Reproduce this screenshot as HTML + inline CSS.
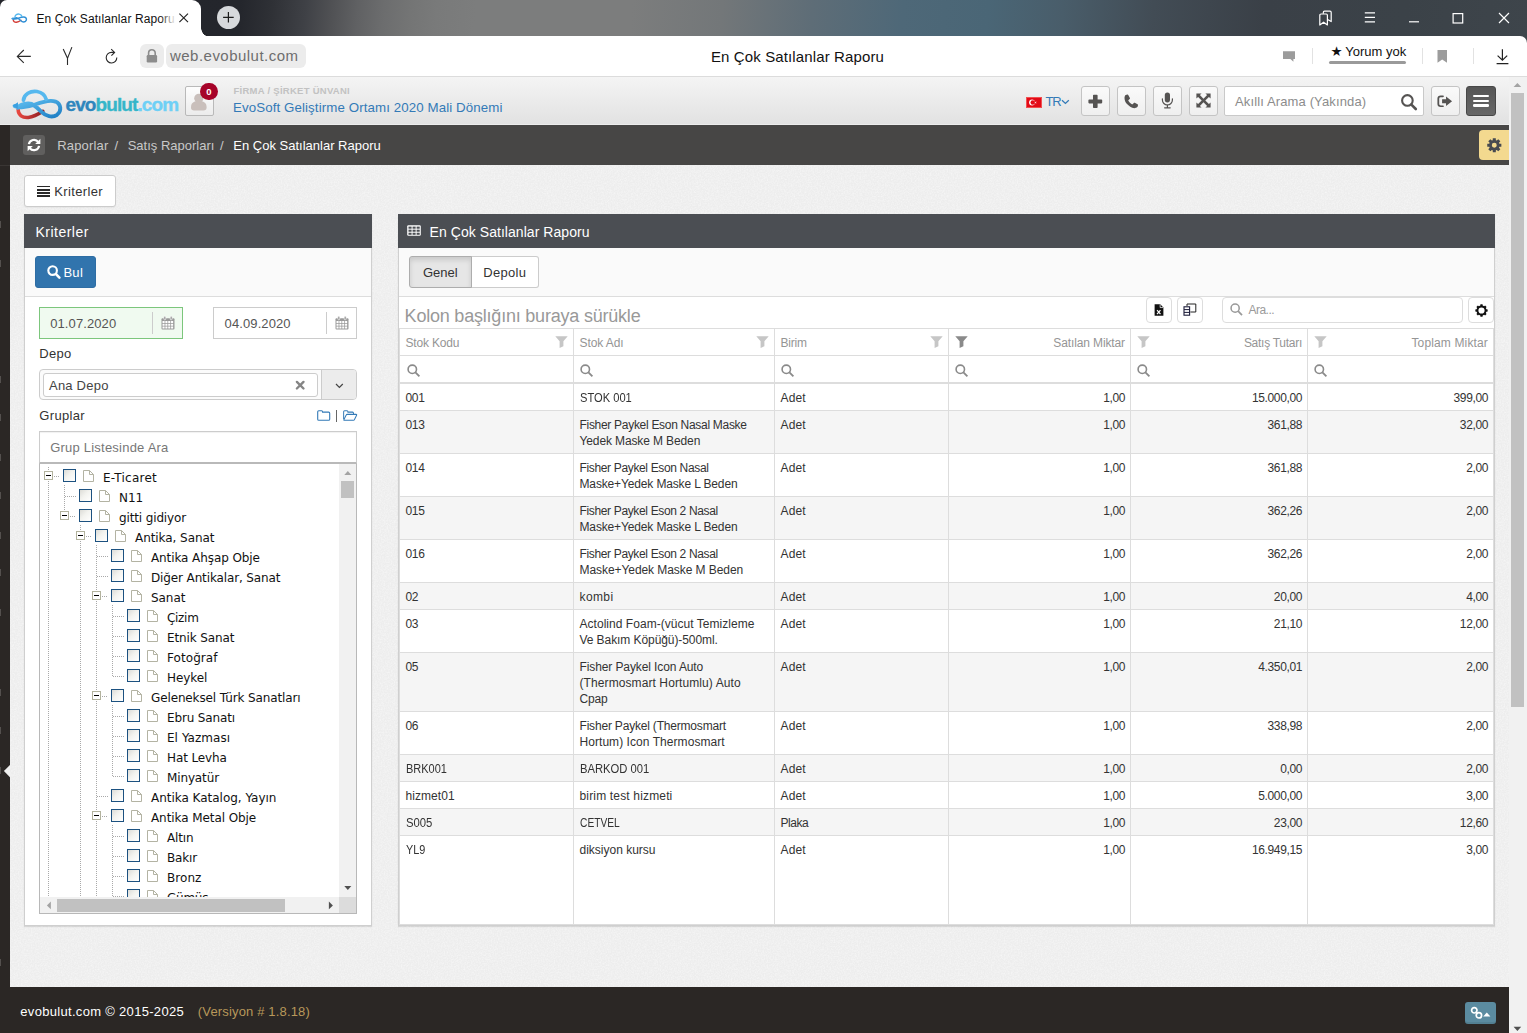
<!DOCTYPE html><html lang="tr"><head><meta charset="utf-8"><title>En Çok Satılanlar Raporu</title><style>
*{box-sizing:border-box;margin:0;padding:0}
html,body{width:1527px;height:1033px;overflow:hidden;background:#fff}
body{font-family:"Liberation Sans",sans-serif;font-size:13px;color:#333;position:relative}
.a{position:absolute}
.t{position:absolute;white-space:nowrap;line-height:1}
svg{position:absolute;display:block;overflow:visible}
/* browser chrome */
#titlebar{left:0;top:0;width:1527px;height:44px;background:linear-gradient(95deg,#23252b 0px,#24262c 240px,#2f3136 272px,#3f4146 305px,#505154 331px,#606163 357px,#6c6d6e 383px,#747575 410px,#797a7a 436px,#7c7d7d 475px,#7c7d7d 630px,#737779 720px,#5e6d77 810px,#4e6878 900px,#4a6676 985px,#495d6a 1060px,#424c55 1150px,#3a4047 1260px,#3b4248 1400px,#3e454b 1527px)}
#tab{left:0;top:0;width:201px;height:37px;background:#fff;border-radius:7px 9px 0 0}
#tabfoot{left:201px;top:28px;width:9px;height:9px;background:radial-gradient(circle at 100% 0,rgba(255,255,255,0) 8.5px,#fff 9px)}
#addr{left:0;top:36px;width:1527px;height:41px;background:#fff;border-bottom:1px solid #dcdcdc;border-radius:0 7px 0 0}
#newtab{left:217px;top:5.5px;width:23.4px;height:23.4px;border-radius:50%;background:#d7d9dc}
.pill{background:#ececec;border-radius:6px}
.vsep{width:1px;background:#e2e2e2}
/* app */
#apphead{left:0;top:77px;width:1509px;height:48px;background:linear-gradient(#f4f4f4,#e2e2e2 97%,#ededed 98%)}
#side{left:0;top:125px;width:10px;height:908px;background:#2b2725}
#crumb{left:10px;top:125px;width:1499px;height:40px;background:#474645}
#content{left:10px;top:165px;width:1499px;height:822px;background:#ededed}
#foot{left:0;top:987px;width:1509px;height:46px;background:#2b2725}
#vscroll{left:1509px;top:77px;width:18px;height:956px;background:#f1f1f1}
.hbtn{width:29.5px;height:29.5px;border:1px solid #c4c4c4;border-radius:3px;background:linear-gradient(#fafafa,#efefef)}
.os{letter-spacing:.2px}
</style></head><body>
<div class="a" id="titlebar"></div>
<div class="a" id="addr"></div>
<div class="a" id="tab"></div><div class="a" id="tabfoot"></div>
<div class="a" id="newtab"></div>
<svg style="left:10.6px;top:12.6px" width="17" height="10.3" viewBox="0 0 56 34"><path d="M7.5 22 C7.5 28 12 31 18 30.4 C24 29.6 29 26.6 33 24" fill="none" stroke="#d43c36" stroke-width="4.6" stroke-linecap="round"/><path d="M4 18.6 C10 20.8 18 19.6 25 17 C32 14.4 40 11.6 46 14 C52 16.6 52.6 24 47.6 27.6 C42.6 31 36 29 31.6 24.6 C27 20 23 15.6 17.6 16 C12 16.4 8.4 18.6 7 20.4" fill="none" stroke="#2f8fd6" stroke-width="4.8" stroke-linecap="round" stroke-linejoin="round"/><path d="M13 12.6 C13.6 6.6 20 2.6 27 3.6 C32.6 4.6 35.4 8 36.4 11.6" fill="none" stroke="#56b8ee" stroke-width="4.4" stroke-linecap="round"/><path d="M.6 18.4 L8 13.6 L7.8 22.4 Z" fill="#3a9fe0"/></svg>
<div class="a" style="left:36px;top:9px;width:140px;height:18px;overflow:hidden"><span class="t" style="left:0.4px;top:3.5px;font-size:12px;color:#111;letter-spacing:.1px">En Çok Satılanlar Raporu</span></div>
<div class="a" style="left:160px;top:8px;width:18px;height:20px;background:linear-gradient(90deg,rgba(255,255,255,0),#fff 90%)"></div>
<svg style="left:178px;top:12px" width="12" height="12" viewBox="0 0 12 12"><path d="M1.4 1.6 L10 10.2 M10 1.6 L1.4 10.2" stroke="#222" stroke-width="1.15" fill="none"/></svg>
<svg style="left:222px;top:11px" width="13" height="13" viewBox="0 0 13 13"><path d="M6.4 1 V11.6 M1.1 6.3 H11.7" stroke="#1c1c1c" stroke-width="1.2" fill="none"/></svg>
<svg style="left:1317px;top:9px" width="18" height="18" viewBox="0 0 18 18"><path d="M2.8 16 V6.2 Q2.8 5 4 5 H9.2 Q10.4 5 10.4 6.2 V16 L6.6 13.2 Z" fill="none" stroke="#fff" stroke-width="1.2" stroke-linejoin="round"/><path d="M6.3 4.8 V3.4 Q6.3 2.2 7.5 2.2 H13 Q14.2 2.2 14.2 3.4 V12.6 L10.6 10.4" fill="none" stroke="#fff" stroke-width="1.2" stroke-linejoin="round"/></svg>
<svg style="left:1364px;top:11px" width="12" height="12" viewBox="0 0 12 12"><path d="M.8 1.9 H11 M.8 6.4 H11 M.8 10.9 H11" stroke="#fff" stroke-width="1.1" fill="none"/></svg>
<svg style="left:1408px;top:18px" width="12" height="6" viewBox="0 0 12 6"><path d="M1 3.8 H11" stroke="#fff" stroke-width="1.2" fill="none"/></svg>
<svg style="left:1452px;top:12px" width="12" height="12" viewBox="0 0 12 12"><rect x="1.1" y="1.6" width="9.6" height="9.4" stroke="#fff" stroke-width="1.2" fill="none"/></svg>
<svg style="left:1498px;top:12px" width="12" height="12" viewBox="0 0 12 12"><path d="M1 1 L11 11 M11 1 L1 11" stroke="#fff" stroke-width="1.15" fill="none"/></svg>
<svg style="left:0;top:36px" width="130" height="42" viewBox="0 36 130 42"><g stroke="#2b2b2b" stroke-width="1.1" fill="none"><path d="M30.8 56.4 H17.3 M23.8 50 L17.3 56.4 L23.8 62.8"/><path d="M63.2 48.9 L67.5 58.2 M71.9 47.1 L67.5 58.4 V64.9"/><path d="M116.8 57.5 A5.3 5.3 0 1 1 111.5 52.4 H114.4 M111.2 49.2 L114.6 52.4 L111.4 55.7"/></g></svg>
<div class="a pill" style="left:140px;top:44px;width:24px;height:24px"></div>
<svg style="left:145px;top:48px" width="14" height="16" viewBox="0 0 14 16"><path d="M3.6 7.4 V5 A3.3 3.3 0 0 1 10.2 5 V7.4" stroke="#8c8c8c" stroke-width="1.6" fill="none"/><rect x="1.7" y="7" width="10.4" height="7.4" rx="1.2" fill="#8c8c8c"/></svg>
<div class="a pill" style="left:166px;top:44px;width:140px;height:24px"></div>
<span class="t" style="left:170px;top:48px;font-size:15px;color:#6e6e6e;letter-spacing:.47px">web.evobulut.com</span>
<span class="t" style="left:711px;top:48.5px;font-size:15px;color:#111;letter-spacing:.12px">En Çok Satılanlar Raporu</span>
<svg style="left:1282px;top:50px" width="14" height="13" viewBox="0 0 14 13"><path d="M1 1.2 H13 V9 H11.4 V11.8 L8.4 9 H1 Z" fill="#9c9c9c"/></svg>
<div class="a vsep" style="left:1312px;top:48px;height:16px"></div>
<span class="t" style="left:1330.5px;top:44.5px;font-size:13.5px;color:#111;font-family:'DejaVu Sans',sans-serif">★</span>
<span class="t" style="left:1345.3px;top:44.8px;font-size:13px;color:#111">Yorum yok</span>
<div class="a" style="left:1329px;top:61px;width:77px;height:3px;border-radius:2px;background:#9a9a9a"></div>
<div class="a vsep" style="left:1422px;top:48px;height:16px"></div>
<svg style="left:1437px;top:49px" width="11" height="15" viewBox="0 0 11 15"><path d="M.5 1 H10 V13.8 L5.2 10.4 L.5 13.8 Z" fill="#9c9c9c"/></svg>
<div class="a vsep" style="left:1473px;top:48px;height:16px"></div>
<svg style="left:1495px;top:48px" width="15" height="17" viewBox="0 0 15 17"><path d="M7.4 1.2 V12 M2.6 7.6 L7.4 12.2 L12.2 7.6 M1.6 15.6 H13.4" stroke="#222" stroke-width="1.2" fill="none"/></svg>
<div class="a" id="apphead"></div>
<div class="a" id="side"></div>
<div class="a" id="crumb"></div>
<div class="a" id="content"></div>
<svg style="left:10px;top:165px" width="1499" height="822"><filter id="nz" x="0" y="0" width="100%" height="100%"><feTurbulence type="fractalNoise" baseFrequency="0.7" numOctaves="2" seed="4"/><feColorMatrix type="matrix" values="0 0 0 0 1  0 0 0 0 1  0 0 0 0 1  1.6 0 0 0 -0.55"/></filter><rect width="1499" height="822" filter="url(#nz)" opacity=".55"/></svg>
<div class="a" id="foot"></div>
<div class="a" id="vscroll"></div>
<svg style="left:10px;top:87.6px" width="56" height="33" viewBox="0 0 56 34"><defs><linearGradient id="lgb" x1="0" y1="0" x2="1" y2="1"><stop offset="0" stop-color="#5fc0f2"/><stop offset="1" stop-color="#1f7fc4"/></linearGradient><linearGradient id="lgr" x1="0" y1="0" x2="1" y2="0"><stop offset="0" stop-color="#e8473f"/><stop offset="1" stop-color="#8e1f24"/></linearGradient></defs><path d="M7.5 22 C7.5 28 12 31 18 30.4 C24 29.6 29 26.6 33 24" fill="none" stroke="url(#lgr)" stroke-width="3.6" stroke-linecap="round"/><path d="M4 18.6 C10 20.8 18 19.6 25 17 C32 14.4 40 11.6 46 14 C52 16.6 52.6 24 47.6 27.6 C42.6 31 36 29 31.6 24.6 C27 20 23 15.6 17.6 16 C12 16.4 8.4 18.6 7 20.4" fill="none" stroke="url(#lgb)" stroke-width="4" stroke-linecap="round" stroke-linejoin="round"/><path d="M13 12.6 C13.6 6.6 20 2.6 27 3.6 C32.6 4.6 35.4 8 36.4 11.6" fill="none" stroke="#56b8ee" stroke-width="3.8" stroke-linecap="round"/><path d="M1.6 18.4 L7.4 14.6 L7.2 21.6 Z" fill="#3a9fe0"/></svg>
<span class="t" style="left:65.5px;top:95.3px;font-size:19px;font-weight:700;letter-spacing:-.9px;-webkit-text-stroke:.35px currentColor"><span style="color:#2f86bd">evo</span><span style="color:#35b6c9">bulut</span><span style="color:#6fd0f6">.com</span></span>
<div class="a" style="left:184.5px;top:86px;width:29.5px;height:29.5px;border:1px solid #b9b9b9;border-radius:2px;background:linear-gradient(#fdfdfd,#ececec)"></div>
<svg style="left:189px;top:92px" width="20" height="20" viewBox="0 0 20 20"><circle cx="9.8" cy="6.3" r="4.6" fill="#c9bfbb"/><path d="M2 15.4 C2 10.6 5 9 9.8 9 C14.6 9 17.6 10.6 17.6 15.4 C17.6 17.6 16.4 18.4 14.6 18.4 H5 C3.2 18.4 2 17.6 2 15.4 Z" fill="#c9bfbb"/></svg>
<div class="a" style="left:200.2px;top:82.9px;width:17.4px;height:17.4px;border-radius:50%;background:#a60329"></div>
<span class="t" style="left:206.2px;top:87px;font-size:9.5px;font-weight:700;color:#fff">0</span>
<span class="t" style="left:233.5px;top:85.5px;font-size:9.5px;font-weight:700;color:#c2c2c2;letter-spacing:.27px">FİRMA / ŞİRKET ÜNVANI</span>
<span class="t" style="left:233px;top:100.5px;font-size:13.3px;color:#337ab7;letter-spacing:.1px">EvoSoft Geliştirme Ortamı 2020 Mali Dönemi</span>
<svg style="left:1026px;top:97px" width="16" height="11" viewBox="0 0 16 11"><rect width="16" height="11" fill="#e30a17"/><rect x=".5" y=".5" width="15" height="10" fill="none" stroke="#f05050" stroke-width="1"/><circle cx="6" cy="5.5" r="2.9" fill="#fff"/><circle cx="6.8" cy="5.5" r="2.3" fill="#e30a17"/><path d="M8.4 5.5 L10.6 4.6 L9.4 6.6 L9.4 4.4 L10.6 6.4 Z" fill="#fff"/></svg>
<span class="t" style="left:1045.6px;top:95px;font-size:13px;color:#337ab7;letter-spacing:-1.4px">TR</span>
<svg style="left:1061px;top:99px" width="9" height="6" viewBox="0 0 9 6"><path d="M1 1.2 L4.4 4.4 L7.8 1.2" stroke="#337ab7" stroke-width="1.3" fill="none"/></svg>
<div class="a hbtn" style="left:1080.5px;top:86.3px"></div>
<div class="a hbtn" style="left:1116.5px;top:86.3px"></div>
<div class="a hbtn" style="left:1152.5px;top:86.3px"></div>
<div class="a hbtn" style="left:1188.5px;top:86.3px"></div>
<svg style="left:1088px;top:94px" width="15" height="15" viewBox="0 0 15 15"><path d="M5.6 .8 H8.6 Q9.4 .8 9.4 1.6 V5.4 H13.2 Q14 5.4 14 6.2 V8.6 Q14 9.4 13.2 9.4 H9.4 V13.2 Q9.4 14 8.6 14 H5.6 Q4.8 14 4.8 13.2 V9.4 H1 Q.2 9.4 .2 8.6 V6.2 Q.2 5.4 1 5.4 H4.8 V1.6 Q4.8 .8 5.6 .8 Z" fill="#555352" transform="translate(.2 0)"/></svg>
<svg style="left:1124px;top:94px" width="15" height="15" viewBox="0 0 15 15"><path d="M14 11 C14 11.6 13.6 12.8 13.3 13.1 C12.6 13.8 11.3 14.2 10.4 14.2 C7.6 14.2 4.6 11.8 3 10.1 C1.4 8.4 .5 6 .5 4 C.5 3 .9 1.8 1.6 1.1 C1.9 .8 3.1 .5 3.6 .5 C3.9 .5 4.1 .7 4.4 1.2 L5.9 3.9 C6.1 4.3 6 4.6 5.7 4.9 L4.5 6 C4.3 6.2 4.3 6.5 4.4 6.8 C5.2 8.3 6.4 9.5 7.9 10.3 C8.2 10.4 8.5 10.4 8.7 10.2 L9.8 9 C10.1 8.7 10.4 8.6 10.8 8.8 L13.5 10.3 C13.9 10.5 14 10.7 14 11 Z" fill="#555352"/></svg>
<svg style="left:1161px;top:92px" width="13" height="17" viewBox="0 0 13 17"><rect x="3.8" y=".4" width="5.2" height="10" rx="2.6" fill="#555352"/><path d="M1.4 6.8 V8 A5 5 0 0 0 11.4 8 V6.8" stroke="#555352" stroke-width="1.2" fill="none" stroke-linecap="round"/><path d="M6.4 13 V15.6 M3.6 15.8 H9.2" stroke="#555352" stroke-width="1.2" fill="none" stroke-linecap="round"/></svg>
<svg style="left:1195.6px;top:93.4px" width="15" height="15" viewBox="0 0 15 15"><path d="M.4 .4 H5.6 L3.9 2.1 L7.5 5.7 L11.1 2.1 L9.4 .4 H14.6 V5.6 L12.9 3.9 L9.3 7.5 L12.9 11.1 L14.6 9.4 V14.6 H9.4 L11.1 12.9 L7.5 9.3 L3.9 12.9 L5.6 14.6 H.4 V9.4 L2.1 11.1 L5.7 7.5 L2.1 3.9 L.4 5.6 Z" fill="#555352"/></svg>
<div class="a" style="left:1224px;top:86.2px;width:200px;height:29.6px;border:1px solid #c9c9c9;border-radius:2px;background:#fff"></div>
<span class="t os" style="left:1235px;top:94.6px;font-size:13px;color:#8c8c8c;letter-spacing:.13px">Akıllı Arama (Yakında)</span>
<svg style="left:1400px;top:93px" width="18" height="18" viewBox="0 0 18 18"><circle cx="7.4" cy="7.4" r="5.3" stroke="#555352" stroke-width="2.1" fill="none"/><path d="M11.4 11.6 L15.8 16" stroke="#555352" stroke-width="2.6" stroke-linecap="round"/></svg>
<div class="a hbtn" style="left:1430.5px;top:86.3px"></div>
<svg style="left:1437.4px;top:95px" width="16" height="12.6" viewBox="0 0 17 15" preserveAspectRatio="none"><path d="M6.4 1.6 H4 Q1.4 1.6 1.4 4.2 V10.8 Q1.4 13.4 4 13.4 H6.4" stroke="#555352" stroke-width="1.9" fill="none" stroke-linecap="round"/><path d="M5.4 5.2 H9.6 V1.8 L16 7.5 L9.6 13.2 V9.8 H5.4 Z" fill="#555352"/></svg>
<div class="a" style="left:1466.3px;top:86px;width:29.7px;height:30px;border:1px solid #474747;border-radius:3px;background:linear-gradient(#555,#676767)"></div>
<div class="a" style="left:1473px;top:94.7px;width:16.2px;height:2.8px;border-radius:1.2px;background:#fff"></div>
<div class="a" style="left:1473px;top:99.6px;width:16.2px;height:2.8px;border-radius:1.2px;background:#fff"></div>
<div class="a" style="left:1473px;top:104.4px;width:16.2px;height:2.8px;border-radius:1.2px;background:#fff"></div>
<svg style="left:1513px;top:82px" width="9" height="6" viewBox="0 0 9 6"><path d="M.6 5 L4.4 .9 L8.2 5 Z" fill="#a3a3a3"/></svg>
<div class="a" style="left:1511px;top:93px;width:13px;height:614px;background:#c1c1c1"></div>
<svg style="left:1513px;top:1026px" width="9" height="6" viewBox="0 0 9 6"><path d="M.6 .8 L4.4 4.9 L8.2 .8 Z" fill="#505050"/></svg>
<div class="a" style="left:23px;top:135px;width:22px;height:20px;border-radius:3px;background:#605f5e"></div>
<svg style="left:27.4px;top:138.4px" width="14" height="14" viewBox="0 0 14 14"><path d="M1.9 6.2 A5.2 5.2 0 0 1 11.2 3.9" stroke="#fff" stroke-width="2.2" fill="none"/><path d="M13.4 .8 V6 H8.2 Z" fill="#fff"/><path d="M12.1 7.8 A5.2 5.2 0 0 1 2.8 10.1" stroke="#fff" stroke-width="2.2" fill="none"/><path d="M.6 13.2 V8 H5.8 Z" fill="#fff"/></svg>
<span class="t" style="left:57.3px;top:139px;font-size:13px;color:#c9c9c9;letter-spacing:.16px">Raporlar</span>
<span class="t" style="left:114.6px;top:139px;font-size:13px;color:#c9c9c9">/</span>
<span class="t" style="left:127.7px;top:139px;font-size:13px;color:#c9c9c9">Satış Raporları</span>
<span class="t" style="left:220px;top:139px;font-size:13px;color:#c9c9c9">/</span>
<span class="t" style="left:233.3px;top:139px;font-size:13px;color:#fff">En Çok Satılanlar Raporu</span>
<div class="a" style="left:1479.2px;top:130px;width:29.8px;height:30px;border-radius:4px 0 0 4px;background:#f3d98f"></div>
<svg style="left:1486.6px;top:137.6px" width="14.6" height="14.6" viewBox="0 0 16 16"><path d="M6.35 0.27 L9.65 0.27 L9.71 2.46 L10.71 2.87 L12.30 1.37 L14.63 3.70 L13.13 5.29 L13.54 6.29 L15.73 6.35 L15.73 9.65 L13.54 9.71 L13.13 10.71 L14.63 12.30 L12.30 14.63 L10.71 13.13 L9.71 13.54 L9.65 15.73 L6.35 15.73 L6.29 13.54 L5.29 13.13 L3.70 14.63 L1.37 12.30 L2.87 10.71 L2.46 9.71 L0.27 9.65 L0.27 6.35 L2.46 6.29 L2.87 5.29 L1.37 3.70 L3.70 1.37 L5.29 2.87 L6.29 2.46 Z M10.7 8 A2.7 2.7 0 1 0 5.3 8 A2.7 2.7 0 1 0 10.7 8 Z" fill="#474a50" fill-rule="evenodd"/></svg>
<svg style="left:3px;top:764px" width="8" height="14" viewBox="0 0 8 14"><path d="M7.2 .8 L.9 7 L7.2 13.4 Z" fill="#efefef"/></svg>
<div class="a" style="left:0;top:221px;width:1px;height:7px;background:#54504e"></div>
<div class="a" style="left:0;top:260px;width:1px;height:7px;background:#54504e"></div>
<div class="a" style="left:0;top:376px;width:1px;height:7px;background:#54504e"></div>
<div class="a" style="left:0;top:414px;width:1px;height:7px;background:#54504e"></div>
<div class="a" style="left:0;top:454px;width:1px;height:7px;background:#54504e"></div>
<div class="a" style="left:0;top:492px;width:1px;height:7px;background:#54504e"></div>
<div class="a" style="left:0;top:532px;width:1px;height:7px;background:#54504e"></div>
<div class="a" style="left:0;top:569px;width:1px;height:7px;background:#54504e"></div>
<div class="a" style="left:0;top:609px;width:1px;height:7px;background:#54504e"></div>
<div class="a" style="left:0;top:689px;width:1px;height:7px;background:#54504e"></div>
<div class="a" style="left:0;top:727px;width:1px;height:7px;background:#54504e"></div>
<div class="a" style="left:0;top:767px;width:1px;height:7px;background:#54504e"></div>
<div class="a" style="left:0;top:959px;width:1px;height:7px;background:#54504e"></div>
<div class="a" style="left:0;top:164.5px;width:10px;height:1px;background:#3a3634"></div>
<div class="a" style="left:24px;top:175px;width:92px;height:31.5px;border:1px solid #ccc;border-radius:3px;background:#fff;box-shadow:0 1px 1px rgba(0,0,0,.04)"></div>
<div class="a" style="left:36.8px;top:185.6px;width:13px;height:1.9px;background:#2a2a2a"></div>
<div class="a" style="left:36.8px;top:188.65px;width:13px;height:1.9px;background:#2a2a2a"></div>
<div class="a" style="left:36.8px;top:191.7px;width:13px;height:1.9px;background:#2a2a2a"></div>
<div class="a" style="left:36.8px;top:194.75px;width:13px;height:1.9px;background:#2a2a2a"></div>
<span class="t" style="left:54.3px;top:184.6px;font-size:13px;color:#333;letter-spacing:.36px">Kriterler</span>
<div class="a" style="left:24px;top:214px;width:348px;height:712px;background:#fff;border:1px solid #cfcfcf;box-shadow:0 1px 1px rgba(0,0,0,.1)"></div>
<div class="a" style="left:24px;top:214px;width:348px;height:34px;background:#4b4e53"></div>
<span class="t" style="left:35.4px;top:225px;font-size:14px;color:#fff;letter-spacing:.5px">Kriterler</span>
<div class="a" style="left:25px;top:248px;width:346px;height:49px;background:#fafafa;border-bottom:1px solid #ddd"></div>
<div class="a" style="left:35px;top:256px;width:61px;height:32px;border:1px solid #2e6da4;border-radius:3px;background:#3174ad"></div>
<svg style="left:47.4px;top:265.2px" width="14" height="14" viewBox="0 0 14 14"><circle cx="5.6" cy="5.6" r="4.3" stroke="#fff" stroke-width="2.1" fill="none"/><path d="M9 9.2 L12.4 12.6" stroke="#fff" stroke-width="2.6" stroke-linecap="round"/></svg>
<span class="t" style="left:63.4px;top:265.6px;font-size:13px;color:#fff;letter-spacing:.3px">Bul</span>
<div class="a" style="left:39px;top:307px;width:144px;height:32px;border:1px solid #7cc67c;background:#f0faf0"></div>
<span class="t" style="left:50.2px;top:316.6px;font-size:13px;color:#555;letter-spacing:.1px">01.07.2020</span>
<div class="a" style="left:152px;top:312px;width:1px;height:22px;background:#ccc"></div>
<svg style="left:161px;top:316px" width="14" height="14" viewBox="0 0 14 14"><rect x=".5" y="2.2" width="13" height="11.3" rx="1" fill="#9a9a9a"/><rect x="2.8" y=".2" width="2" height="3.6" rx=".9" fill="#9a9a9a" stroke="#fff" stroke-width=".6"/><rect x="9.2" y=".2" width="2" height="3.6" rx=".9" fill="#9a9a9a" stroke="#fff" stroke-width=".6"/><rect x="1.50" y="5.00" width="2.1" height="2" fill="#fff"/><rect x="4.35" y="5.00" width="2.1" height="2" fill="#fff"/><rect x="7.20" y="5.00" width="2.1" height="2" fill="#fff"/><rect x="10.05" y="5.00" width="2.1" height="2" fill="#fff"/><rect x="1.50" y="7.75" width="2.1" height="2" fill="#fff"/><rect x="4.35" y="7.75" width="2.1" height="2" fill="#fff"/><rect x="7.20" y="7.75" width="2.1" height="2" fill="#fff"/><rect x="10.05" y="7.75" width="2.1" height="2" fill="#fff"/><rect x="1.50" y="10.50" width="2.1" height="2" fill="#fff"/><rect x="4.35" y="10.50" width="2.1" height="2" fill="#fff"/><rect x="7.20" y="10.50" width="2.1" height="2" fill="#fff"/><rect x="10.05" y="10.50" width="2.1" height="2" fill="#fff"/></svg>
<div class="a" style="left:213px;top:307px;width:144px;height:32px;border:1px solid #ccc;background:#fff"></div>
<span class="t" style="left:224.6px;top:316.6px;font-size:13px;color:#555;letter-spacing:.1px">04.09.2020</span>
<div class="a" style="left:326px;top:312px;width:1px;height:22px;background:#ccc"></div>
<svg style="left:335px;top:316px" width="14" height="14" viewBox="0 0 14 14"><rect x=".5" y="2.2" width="13" height="11.3" rx="1" fill="#9a9a9a"/><rect x="2.8" y=".2" width="2" height="3.6" rx=".9" fill="#9a9a9a" stroke="#fff" stroke-width=".6"/><rect x="9.2" y=".2" width="2" height="3.6" rx=".9" fill="#9a9a9a" stroke="#fff" stroke-width=".6"/><rect x="1.50" y="5.00" width="2.1" height="2" fill="#fff"/><rect x="4.35" y="5.00" width="2.1" height="2" fill="#fff"/><rect x="7.20" y="5.00" width="2.1" height="2" fill="#fff"/><rect x="10.05" y="5.00" width="2.1" height="2" fill="#fff"/><rect x="1.50" y="7.75" width="2.1" height="2" fill="#fff"/><rect x="4.35" y="7.75" width="2.1" height="2" fill="#fff"/><rect x="7.20" y="7.75" width="2.1" height="2" fill="#fff"/><rect x="10.05" y="7.75" width="2.1" height="2" fill="#fff"/><rect x="1.50" y="10.50" width="2.1" height="2" fill="#fff"/><rect x="4.35" y="10.50" width="2.1" height="2" fill="#fff"/><rect x="7.20" y="10.50" width="2.1" height="2" fill="#fff"/><rect x="10.05" y="10.50" width="2.1" height="2" fill="#fff"/></svg>
<span class="t" style="left:39.3px;top:347px;font-size:13px;color:#333;letter-spacing:.25px">Depo</span>
<div class="a" style="left:39.3px;top:369px;width:317.6px;height:31.4px;border:1px solid #ccc;border-radius:4px;background:#fbfbfb"></div>
<div class="a" style="left:321px;top:370px;width:35px;height:29.4px;border-left:1px solid #ccc;border-radius:0 3px 3px 0;background:#ececec"></div>
<div class="a" style="left:43px;top:373px;width:274.6px;height:23.6px;border:1px solid #ccc;border-radius:3px;background:#fff"></div>
<span class="t" style="left:49px;top:378.9px;font-size:13px;color:#444;letter-spacing:.22px">Ana Depo</span>
<svg style="left:295.4px;top:380.4px" width="10.4" height="10.4" viewBox="0 0 11 11"><path d="M2 2 L9 9 M9 2 L2 9" stroke="#858585" stroke-width="2.5" stroke-linecap="round"/></svg>
<svg style="left:334.6px;top:383px" width="9" height="6" viewBox="0 0 9 6"><path d="M1 1 L4.4 4.4 L7.8 1" stroke="#444" stroke-width="1.2" fill="none"/></svg>
<span class="t" style="left:39.3px;top:408.8px;font-size:13px;color:#333;letter-spacing:.33px">Gruplar</span>
<svg style="left:316.6px;top:409.6px" width="14" height="11" viewBox="0 0 14 11"><path d="M.7 1.8 Q.7 .7 1.8 .7 H4.6 Q5.6 .7 5.6 1.7 V2.1 H11.6 Q12.7 2.1 12.7 3.2 V9.2 Q12.7 10.3 11.6 10.3 H1.8 Q.7 10.3 .7 9.2 Z" fill="none" stroke="#337ab7" stroke-width="1.1"/></svg>
<div class="a" style="left:336px;top:410px;width:1px;height:12px;background:#666"></div>
<svg style="left:342.8px;top:409.6px" width="14.6" height="11" viewBox="0 0 16 11" preserveAspectRatio="none"><path d="M.7 9 V1.8 Q.7 .7 1.8 .7 H4.4 Q5.4 .7 5.4 1.7 V2.1 H10.4 Q11.5 2.1 11.5 3.2 V4.4" fill="none" stroke="#337ab7" stroke-width="1.1"/><path d="M.9 9.8 L3.5 5 Q3.8 4.4 4.5 4.4 H14.4 Q15.3 4.4 14.9 5.2 L12.6 9.6 Q12.3 10.3 11.5 10.3 H1.4 Q.7 10.3 .9 9.8 Z" fill="none" stroke="#337ab7" stroke-width="1.1"/></svg>
<div class="a" style="left:39.3px;top:431px;width:317.6px;height:33px;border:1px solid #ccc;border-bottom:2px solid #b9b9b9;background:#fff;box-shadow:inset 0 1px 1px rgba(0,0,0,.06)"></div>
<span class="t" style="left:50.2px;top:441px;font-size:13px;color:#777;letter-spacing:.22px">Grup Listesinde Ara</span>
<div class="a" id="tree" style="left:39.3px;top:464px;width:317.6px;height:450px;border:1px solid #b8b8b8;border-top:0;background:#fff;overflow:hidden"></div>
<div class="a" style="left:40.3px;top:464px;width:299px;height:433px;overflow:hidden;font-family:'DejaVu Sans',sans-serif"><div class="a" style="left:7.7px;top:3px;width:1px;height:3.5px;background:repeating-linear-gradient(180deg,#a9a9a9 0 1px,transparent 1px 2px)"></div><div class="a" style="left:7.7px;top:16.5px;width:1px;height:419.5px;background:repeating-linear-gradient(180deg,#a9a9a9 0 1px,transparent 1px 2px)"></div><div class="a" style="left:23.7px;top:21px;width:1px;height:25.5px;background:repeating-linear-gradient(180deg,#a9a9a9 0 1px,transparent 1px 2px)"></div><div class="a" style="left:39.7px;top:61px;width:1px;height:5.5px;background:repeating-linear-gradient(180deg,#a9a9a9 0 1px,transparent 1px 2px)"></div><div class="a" style="left:39.7px;top:76.5px;width:1px;height:359.5px;background:repeating-linear-gradient(180deg,#a9a9a9 0 1px,transparent 1px 2px)"></div><div class="a" style="left:55.7px;top:81px;width:1px;height:45.5px;background:repeating-linear-gradient(180deg,#a9a9a9 0 1px,transparent 1px 2px)"></div><div class="a" style="left:55.7px;top:136.5px;width:1px;height:90.0px;background:repeating-linear-gradient(180deg,#a9a9a9 0 1px,transparent 1px 2px)"></div><div class="a" style="left:55.7px;top:236.5px;width:1px;height:110.0px;background:repeating-linear-gradient(180deg,#a9a9a9 0 1px,transparent 1px 2px)"></div><div class="a" style="left:55.7px;top:356.5px;width:1px;height:79.5px;background:repeating-linear-gradient(180deg,#a9a9a9 0 1px,transparent 1px 2px)"></div><div class="a" style="left:71.7px;top:141px;width:1px;height:70.5px;background:repeating-linear-gradient(180deg,#a9a9a9 0 1px,transparent 1px 2px)"></div><div class="a" style="left:71.7px;top:241px;width:1px;height:70.5px;background:repeating-linear-gradient(180deg,#a9a9a9 0 1px,transparent 1px 2px)"></div><div class="a" style="left:71.7px;top:361px;width:1px;height:75px;background:repeating-linear-gradient(180deg,#a9a9a9 0 1px,transparent 1px 2px)"></div><div class="a" style="left:13.7px;top:11.5px;width:5.0px;height:1px;background:repeating-linear-gradient(90deg,#a9a9a9 0 1px,transparent 1px 2px)"></div><div class="a" style="left:3.7px;top:7px;width:9px;height:9px;border:1px solid #b2b29d;background:#fff"></div><div class="a" style="left:5.7px;top:11px;width:5px;height:1px;background:#000"></div><div class="a" style="left:22.7px;top:5px;width:13px;height:13px;border:1px solid #1c5180;background:linear-gradient(135deg,#dcdcd7 0,#f3f3ef 45%,#fff 100%)"></div><svg style="left:42.7px;top:6px" width="11" height="12" viewBox="0 0 11 12"><path d="M.5 .5 H6.5 L10.5 4.5 V11.5 H.5 Z" fill="#fff" stroke="#b3b3a3" stroke-width="1"/><path d="M6.5 .5 V4.5 H10.5" fill="none" stroke="#b3b3a3" stroke-width="1"/></svg><span class="t" style="left:62.7px;top:8.2px;font-size:12px;color:#111;letter-spacing:0.246px">E-Ticaret</span><div class="a" style="left:24.7px;top:31.5px;width:12.000000000000004px;height:1px;background:repeating-linear-gradient(90deg,#a9a9a9 0 1px,transparent 1px 2px)"></div><div class="a" style="left:38.7px;top:25px;width:13px;height:13px;border:1px solid #1c5180;background:linear-gradient(135deg,#dcdcd7 0,#f3f3ef 45%,#fff 100%)"></div><svg style="left:58.7px;top:26px" width="11" height="12" viewBox="0 0 11 12"><path d="M.5 .5 H6.5 L10.5 4.5 V11.5 H.5 Z" fill="#fff" stroke="#b3b3a3" stroke-width="1"/><path d="M6.5 .5 V4.5 H10.5" fill="none" stroke="#b3b3a3" stroke-width="1"/></svg><span class="t" style="left:78.7px;top:28.2px;font-size:12px;color:#111;letter-spacing:-0.075px">N11</span><div class="a" style="left:29.7px;top:51.5px;width:5.0000000000000036px;height:1px;background:repeating-linear-gradient(90deg,#a9a9a9 0 1px,transparent 1px 2px)"></div><div class="a" style="left:19.7px;top:47px;width:9px;height:9px;border:1px solid #b2b29d;background:#fff"></div><div class="a" style="left:21.7px;top:51px;width:5px;height:1px;background:#000"></div><div class="a" style="left:38.7px;top:45px;width:13px;height:13px;border:1px solid #1c5180;background:linear-gradient(135deg,#dcdcd7 0,#f3f3ef 45%,#fff 100%)"></div><svg style="left:58.7px;top:46px" width="11" height="12" viewBox="0 0 11 12"><path d="M.5 .5 H6.5 L10.5 4.5 V11.5 H.5 Z" fill="#fff" stroke="#b3b3a3" stroke-width="1"/><path d="M6.5 .5 V4.5 H10.5" fill="none" stroke="#b3b3a3" stroke-width="1"/></svg><span class="t" style="left:78.7px;top:48.2px;font-size:12px;color:#111;letter-spacing:-0.133px">gitti gidiyor</span><div class="a" style="left:45.7px;top:71.5px;width:5.0px;height:1px;background:repeating-linear-gradient(90deg,#a9a9a9 0 1px,transparent 1px 2px)"></div><div class="a" style="left:35.7px;top:67px;width:9px;height:9px;border:1px solid #b2b29d;background:#fff"></div><div class="a" style="left:37.7px;top:71px;width:5px;height:1px;background:#000"></div><div class="a" style="left:54.7px;top:65px;width:13px;height:13px;border:1px solid #1c5180;background:linear-gradient(135deg,#dcdcd7 0,#f3f3ef 45%,#fff 100%)"></div><svg style="left:74.7px;top:66px" width="11" height="12" viewBox="0 0 11 12"><path d="M.5 .5 H6.5 L10.5 4.5 V11.5 H.5 Z" fill="#fff" stroke="#b3b3a3" stroke-width="1"/><path d="M6.5 .5 V4.5 H10.5" fill="none" stroke="#b3b3a3" stroke-width="1"/></svg><span class="t" style="left:94.7px;top:68.2px;font-size:12px;color:#111;letter-spacing:-0.060px">Antika, Sanat</span><div class="a" style="left:56.7px;top:91.5px;width:12.0px;height:1px;background:repeating-linear-gradient(90deg,#a9a9a9 0 1px,transparent 1px 2px)"></div><div class="a" style="left:70.7px;top:85px;width:13px;height:13px;border:1px solid #1c5180;background:linear-gradient(135deg,#dcdcd7 0,#f3f3ef 45%,#fff 100%)"></div><svg style="left:90.7px;top:86px" width="11" height="12" viewBox="0 0 11 12"><path d="M.5 .5 H6.5 L10.5 4.5 V11.5 H.5 Z" fill="#fff" stroke="#b3b3a3" stroke-width="1"/><path d="M6.5 .5 V4.5 H10.5" fill="none" stroke="#b3b3a3" stroke-width="1"/></svg><span class="t" style="left:110.7px;top:88.2px;font-size:12px;color:#111;letter-spacing:-0.093px">Antika Ahşap Obje</span><div class="a" style="left:56.7px;top:111.5px;width:12.0px;height:1px;background:repeating-linear-gradient(90deg,#a9a9a9 0 1px,transparent 1px 2px)"></div><div class="a" style="left:70.7px;top:105px;width:13px;height:13px;border:1px solid #1c5180;background:linear-gradient(135deg,#dcdcd7 0,#f3f3ef 45%,#fff 100%)"></div><svg style="left:90.7px;top:106px" width="11" height="12" viewBox="0 0 11 12"><path d="M.5 .5 H6.5 L10.5 4.5 V11.5 H.5 Z" fill="#fff" stroke="#b3b3a3" stroke-width="1"/><path d="M6.5 .5 V4.5 H10.5" fill="none" stroke="#b3b3a3" stroke-width="1"/></svg><span class="t" style="left:110.7px;top:108.2px;font-size:12px;color:#111;letter-spacing:-0.126px">Diğer Antikalar, Sanat</span><div class="a" style="left:61.7px;top:131.5px;width:5.0px;height:1px;background:repeating-linear-gradient(90deg,#a9a9a9 0 1px,transparent 1px 2px)"></div><div class="a" style="left:51.7px;top:127px;width:9px;height:9px;border:1px solid #b2b29d;background:#fff"></div><div class="a" style="left:53.7px;top:131px;width:5px;height:1px;background:#000"></div><div class="a" style="left:70.7px;top:125px;width:13px;height:13px;border:1px solid #1c5180;background:linear-gradient(135deg,#dcdcd7 0,#f3f3ef 45%,#fff 100%)"></div><svg style="left:90.7px;top:126px" width="11" height="12" viewBox="0 0 11 12"><path d="M.5 .5 H6.5 L10.5 4.5 V11.5 H.5 Z" fill="#fff" stroke="#b3b3a3" stroke-width="1"/><path d="M6.5 .5 V4.5 H10.5" fill="none" stroke="#b3b3a3" stroke-width="1"/></svg><span class="t" style="left:110.7px;top:128.2px;font-size:12px;color:#111;letter-spacing:-0.060px">Sanat</span><div class="a" style="left:72.7px;top:151.5px;width:12.0px;height:1px;background:repeating-linear-gradient(90deg,#a9a9a9 0 1px,transparent 1px 2px)"></div><div class="a" style="left:86.7px;top:145px;width:13px;height:13px;border:1px solid #1c5180;background:linear-gradient(135deg,#dcdcd7 0,#f3f3ef 45%,#fff 100%)"></div><svg style="left:106.7px;top:146px" width="11" height="12" viewBox="0 0 11 12"><path d="M.5 .5 H6.5 L10.5 4.5 V11.5 H.5 Z" fill="#fff" stroke="#b3b3a3" stroke-width="1"/><path d="M6.5 .5 V4.5 H10.5" fill="none" stroke="#b3b3a3" stroke-width="1"/></svg><span class="t" style="left:126.7px;top:148.2px;font-size:12px;color:#111;letter-spacing:-0.300px">Çizim</span><div class="a" style="left:72.7px;top:171.5px;width:12.0px;height:1px;background:repeating-linear-gradient(90deg,#a9a9a9 0 1px,transparent 1px 2px)"></div><div class="a" style="left:86.7px;top:165px;width:13px;height:13px;border:1px solid #1c5180;background:linear-gradient(135deg,#dcdcd7 0,#f3f3ef 45%,#fff 100%)"></div><svg style="left:106.7px;top:166px" width="11" height="12" viewBox="0 0 11 12"><path d="M.5 .5 H6.5 L10.5 4.5 V11.5 H.5 Z" fill="#fff" stroke="#b3b3a3" stroke-width="1"/><path d="M6.5 .5 V4.5 H10.5" fill="none" stroke="#b3b3a3" stroke-width="1"/></svg><span class="t" style="left:126.7px;top:168.2px;font-size:12px;color:#111;letter-spacing:-0.122px">Etnik Sanat</span><div class="a" style="left:72.7px;top:191.5px;width:12.0px;height:1px;background:repeating-linear-gradient(90deg,#a9a9a9 0 1px,transparent 1px 2px)"></div><div class="a" style="left:86.7px;top:185px;width:13px;height:13px;border:1px solid #1c5180;background:linear-gradient(135deg,#dcdcd7 0,#f3f3ef 45%,#fff 100%)"></div><svg style="left:106.7px;top:186px" width="11" height="12" viewBox="0 0 11 12"><path d="M.5 .5 H6.5 L10.5 4.5 V11.5 H.5 Z" fill="#fff" stroke="#b3b3a3" stroke-width="1"/><path d="M6.5 .5 V4.5 H10.5" fill="none" stroke="#b3b3a3" stroke-width="1"/></svg><span class="t" style="left:126.7px;top:188.2px;font-size:12px;color:#111;letter-spacing:0.071px">Fotoğraf</span><div class="a" style="left:72.7px;top:211.5px;width:12.0px;height:1px;background:repeating-linear-gradient(90deg,#a9a9a9 0 1px,transparent 1px 2px)"></div><div class="a" style="left:86.7px;top:205px;width:13px;height:13px;border:1px solid #1c5180;background:linear-gradient(135deg,#dcdcd7 0,#f3f3ef 45%,#fff 100%)"></div><svg style="left:106.7px;top:206px" width="11" height="12" viewBox="0 0 11 12"><path d="M.5 .5 H6.5 L10.5 4.5 V11.5 H.5 Z" fill="#fff" stroke="#b3b3a3" stroke-width="1"/><path d="M6.5 .5 V4.5 H10.5" fill="none" stroke="#b3b3a3" stroke-width="1"/></svg><span class="t" style="left:126.7px;top:208.2px;font-size:12px;color:#111;letter-spacing:-0.090px">Heykel</span><div class="a" style="left:61.7px;top:231.5px;width:5.0px;height:1px;background:repeating-linear-gradient(90deg,#a9a9a9 0 1px,transparent 1px 2px)"></div><div class="a" style="left:51.7px;top:227px;width:9px;height:9px;border:1px solid #b2b29d;background:#fff"></div><div class="a" style="left:53.7px;top:231px;width:5px;height:1px;background:#000"></div><div class="a" style="left:70.7px;top:225px;width:13px;height:13px;border:1px solid #1c5180;background:linear-gradient(135deg,#dcdcd7 0,#f3f3ef 45%,#fff 100%)"></div><svg style="left:90.7px;top:226px" width="11" height="12" viewBox="0 0 11 12"><path d="M.5 .5 H6.5 L10.5 4.5 V11.5 H.5 Z" fill="#fff" stroke="#b3b3a3" stroke-width="1"/><path d="M6.5 .5 V4.5 H10.5" fill="none" stroke="#b3b3a3" stroke-width="1"/></svg><span class="t" style="left:110.7px;top:228.2px;font-size:12px;color:#111;letter-spacing:-0.125px">Geleneksel Türk Sanatları</span><div class="a" style="left:72.7px;top:251.5px;width:12.0px;height:1px;background:repeating-linear-gradient(90deg,#a9a9a9 0 1px,transparent 1px 2px)"></div><div class="a" style="left:86.7px;top:245px;width:13px;height:13px;border:1px solid #1c5180;background:linear-gradient(135deg,#dcdcd7 0,#f3f3ef 45%,#fff 100%)"></div><svg style="left:106.7px;top:246px" width="11" height="12" viewBox="0 0 11 12"><path d="M.5 .5 H6.5 L10.5 4.5 V11.5 H.5 Z" fill="#fff" stroke="#b3b3a3" stroke-width="1"/><path d="M6.5 .5 V4.5 H10.5" fill="none" stroke="#b3b3a3" stroke-width="1"/></svg><span class="t" style="left:126.7px;top:248.2px;font-size:12px;color:#111;letter-spacing:-0.133px">Ebru Sanatı</span><div class="a" style="left:72.7px;top:271.5px;width:12.0px;height:1px;background:repeating-linear-gradient(90deg,#a9a9a9 0 1px,transparent 1px 2px)"></div><div class="a" style="left:86.7px;top:265px;width:13px;height:13px;border:1px solid #1c5180;background:linear-gradient(135deg,#dcdcd7 0,#f3f3ef 45%,#fff 100%)"></div><svg style="left:106.7px;top:266px" width="11" height="12" viewBox="0 0 11 12"><path d="M.5 .5 H6.5 L10.5 4.5 V11.5 H.5 Z" fill="#fff" stroke="#b3b3a3" stroke-width="1"/><path d="M6.5 .5 V4.5 H10.5" fill="none" stroke="#b3b3a3" stroke-width="1"/></svg><span class="t" style="left:126.7px;top:268.2px;font-size:12px;color:#111;letter-spacing:0.055px">El Yazması</span><div class="a" style="left:72.7px;top:291.5px;width:12.0px;height:1px;background:repeating-linear-gradient(90deg,#a9a9a9 0 1px,transparent 1px 2px)"></div><div class="a" style="left:86.7px;top:285px;width:13px;height:13px;border:1px solid #1c5180;background:linear-gradient(135deg,#dcdcd7 0,#f3f3ef 45%,#fff 100%)"></div><svg style="left:106.7px;top:286px" width="11" height="12" viewBox="0 0 11 12"><path d="M.5 .5 H6.5 L10.5 4.5 V11.5 H.5 Z" fill="#fff" stroke="#b3b3a3" stroke-width="1"/><path d="M6.5 .5 V4.5 H10.5" fill="none" stroke="#b3b3a3" stroke-width="1"/></svg><span class="t" style="left:126.7px;top:288.2px;font-size:12px;color:#111;letter-spacing:-0.116px">Hat Levha</span><div class="a" style="left:72.7px;top:311.5px;width:12.0px;height:1px;background:repeating-linear-gradient(90deg,#a9a9a9 0 1px,transparent 1px 2px)"></div><div class="a" style="left:86.7px;top:305px;width:13px;height:13px;border:1px solid #1c5180;background:linear-gradient(135deg,#dcdcd7 0,#f3f3ef 45%,#fff 100%)"></div><svg style="left:106.7px;top:306px" width="11" height="12" viewBox="0 0 11 12"><path d="M.5 .5 H6.5 L10.5 4.5 V11.5 H.5 Z" fill="#fff" stroke="#b3b3a3" stroke-width="1"/><path d="M6.5 .5 V4.5 H10.5" fill="none" stroke="#b3b3a3" stroke-width="1"/></svg><span class="t" style="left:126.7px;top:308.2px;font-size:12px;color:#111;letter-spacing:-0.129px">Minyatür</span><div class="a" style="left:56.7px;top:331.5px;width:12.0px;height:1px;background:repeating-linear-gradient(90deg,#a9a9a9 0 1px,transparent 1px 2px)"></div><div class="a" style="left:70.7px;top:325px;width:13px;height:13px;border:1px solid #1c5180;background:linear-gradient(135deg,#dcdcd7 0,#f3f3ef 45%,#fff 100%)"></div><svg style="left:90.7px;top:326px" width="11" height="12" viewBox="0 0 11 12"><path d="M.5 .5 H6.5 L10.5 4.5 V11.5 H.5 Z" fill="#fff" stroke="#b3b3a3" stroke-width="1"/><path d="M6.5 .5 V4.5 H10.5" fill="none" stroke="#b3b3a3" stroke-width="1"/></svg><span class="t" style="left:110.7px;top:328.2px;font-size:12px;color:#111;letter-spacing:-0.021px">Antika Katalog, Yayın</span><div class="a" style="left:61.7px;top:351.5px;width:5.0px;height:1px;background:repeating-linear-gradient(90deg,#a9a9a9 0 1px,transparent 1px 2px)"></div><div class="a" style="left:51.7px;top:347px;width:9px;height:9px;border:1px solid #b2b29d;background:#fff"></div><div class="a" style="left:53.7px;top:351px;width:5px;height:1px;background:#000"></div><div class="a" style="left:70.7px;top:345px;width:13px;height:13px;border:1px solid #1c5180;background:linear-gradient(135deg,#dcdcd7 0,#f3f3ef 45%,#fff 100%)"></div><svg style="left:90.7px;top:346px" width="11" height="12" viewBox="0 0 11 12"><path d="M.5 .5 H6.5 L10.5 4.5 V11.5 H.5 Z" fill="#fff" stroke="#b3b3a3" stroke-width="1"/><path d="M6.5 .5 V4.5 H10.5" fill="none" stroke="#b3b3a3" stroke-width="1"/></svg><span class="t" style="left:110.7px;top:348.2px;font-size:12px;color:#111;letter-spacing:-0.080px">Antika Metal Obje</span><div class="a" style="left:72.7px;top:371.5px;width:12.0px;height:1px;background:repeating-linear-gradient(90deg,#a9a9a9 0 1px,transparent 1px 2px)"></div><div class="a" style="left:86.7px;top:365px;width:13px;height:13px;border:1px solid #1c5180;background:linear-gradient(135deg,#dcdcd7 0,#f3f3ef 45%,#fff 100%)"></div><svg style="left:106.7px;top:366px" width="11" height="12" viewBox="0 0 11 12"><path d="M.5 .5 H6.5 L10.5 4.5 V11.5 H.5 Z" fill="#fff" stroke="#b3b3a3" stroke-width="1"/><path d="M6.5 .5 V4.5 H10.5" fill="none" stroke="#b3b3a3" stroke-width="1"/></svg><span class="t" style="left:126.7px;top:368.2px;font-size:12px;color:#111;letter-spacing:-0.122px">Altın</span><div class="a" style="left:72.7px;top:391.5px;width:12.0px;height:1px;background:repeating-linear-gradient(90deg,#a9a9a9 0 1px,transparent 1px 2px)"></div><div class="a" style="left:86.7px;top:385px;width:13px;height:13px;border:1px solid #1c5180;background:linear-gradient(135deg,#dcdcd7 0,#f3f3ef 45%,#fff 100%)"></div><svg style="left:106.7px;top:386px" width="11" height="12" viewBox="0 0 11 12"><path d="M.5 .5 H6.5 L10.5 4.5 V11.5 H.5 Z" fill="#fff" stroke="#b3b3a3" stroke-width="1"/><path d="M6.5 .5 V4.5 H10.5" fill="none" stroke="#b3b3a3" stroke-width="1"/></svg><span class="t" style="left:126.7px;top:388.2px;font-size:12px;color:#111;letter-spacing:-0.153px">Bakır</span><div class="a" style="left:72.7px;top:411.5px;width:12.0px;height:1px;background:repeating-linear-gradient(90deg,#a9a9a9 0 1px,transparent 1px 2px)"></div><div class="a" style="left:86.7px;top:405px;width:13px;height:13px;border:1px solid #1c5180;background:linear-gradient(135deg,#dcdcd7 0,#f3f3ef 45%,#fff 100%)"></div><svg style="left:106.7px;top:406px" width="11" height="12" viewBox="0 0 11 12"><path d="M.5 .5 H6.5 L10.5 4.5 V11.5 H.5 Z" fill="#fff" stroke="#b3b3a3" stroke-width="1"/><path d="M6.5 .5 V4.5 H10.5" fill="none" stroke="#b3b3a3" stroke-width="1"/></svg><span class="t" style="left:126.7px;top:408.2px;font-size:12px;color:#111;letter-spacing:0.061px">Bronz</span><div class="a" style="left:72.7px;top:431.5px;width:12.0px;height:1px;background:repeating-linear-gradient(90deg,#a9a9a9 0 1px,transparent 1px 2px)"></div><div class="a" style="left:86.7px;top:425px;width:13px;height:13px;border:1px solid #1c5180;background:linear-gradient(135deg,#dcdcd7 0,#f3f3ef 45%,#fff 100%)"></div><svg style="left:106.7px;top:426px" width="11" height="12" viewBox="0 0 11 12"><path d="M.5 .5 H6.5 L10.5 4.5 V11.5 H.5 Z" fill="#fff" stroke="#b3b3a3" stroke-width="1"/><path d="M6.5 .5 V4.5 H10.5" fill="none" stroke="#b3b3a3" stroke-width="1"/></svg><span class="t" style="left:126.7px;top:428.2px;font-size:12px;color:#111;letter-spacing:-0.238px">Gümüş</span></div>
<div class="a" style="left:339.3px;top:464px;width:16.6px;height:433px;background:#f1f1f1"></div>
<svg style="left:343.6px;top:470px" width="8" height="6" viewBox="0 0 8 6"><path d="M.3 4.9 L3.8 .9 L7.3 4.9 Z" fill="#a3a3a3"/></svg>
<div class="a" style="left:341px;top:481px;width:13px;height:17px;background:#c1c1c1"></div>
<svg style="left:343.6px;top:885px" width="8" height="6" viewBox="0 0 8 6"><path d="M.3 .9 L3.8 4.9 L7.3 .9 Z" fill="#505050"/></svg>
<div class="a" style="left:40.3px;top:897px;width:299px;height:16.4px;background:#f1f1f1"></div>
<div class="a" style="left:339.3px;top:897px;width:16.6px;height:16.4px;background:#dcdcdc"></div>
<svg style="left:45.6px;top:901px" width="6" height="9" viewBox="0 0 6 9"><path d="M4.9 .6 L.9 4.4 L4.9 8.2 Z" fill="#a3a3a3"/></svg>
<div class="a" style="left:56.8px;top:899px;width:228.2px;height:13px;background:#c1c1c1"></div>
<svg style="left:328px;top:901px" width="6" height="9" viewBox="0 0 6 9"><path d="M.9 .6 L4.9 4.4 L.9 8.2 Z" fill="#505050"/></svg>
<div class="a" style="left:398px;top:214px;width:1097px;height:712px;background:#fff;border:1px solid #cfcfcf;box-shadow:0 1px 1px rgba(0,0,0,.1)"></div>
<div class="a" style="left:398px;top:214px;width:1097px;height:34px;background:#4b4e53"></div>
<svg style="left:407px;top:225.2px" width="14" height="11" viewBox="0 0 14 11"><rect x=".2" y=".2" width="13.6" height="10.6" rx="1.2" fill="#fff"/><rect x="1.50" y="1.60" width="3.1" height="2.1" fill="#4b4e53"/><rect x="5.55" y="1.60" width="3.1" height="2.1" fill="#4b4e53"/><rect x="9.60" y="1.60" width="3.1" height="2.1" fill="#4b4e53"/><rect x="1.50" y="4.65" width="3.1" height="2.1" fill="#4b4e53"/><rect x="5.55" y="4.65" width="3.1" height="2.1" fill="#4b4e53"/><rect x="9.60" y="4.65" width="3.1" height="2.1" fill="#4b4e53"/><rect x="1.50" y="7.70" width="3.1" height="2.1" fill="#4b4e53"/><rect x="5.55" y="7.70" width="3.1" height="2.1" fill="#4b4e53"/><rect x="9.60" y="7.70" width="3.1" height="2.1" fill="#4b4e53"/></svg>
<span class="t" style="left:429.6px;top:225px;font-size:14px;color:#fff;letter-spacing:.05px">En Çok Satılanlar Raporu</span>
<div class="a" style="left:399px;top:248px;width:1095px;height:49px;background:#fafafa;border-bottom:1px solid #ddd"></div>
<div class="a" style="left:470.2px;top:256.4px;width:68.6px;height:31.4px;border:1px solid #ccc;border-left:0;border-radius:0 3px 3px 0;background:#fff"></div>
<div class="a" style="left:409.2px;top:256.4px;width:62.4px;height:31.4px;border:1px solid #adadad;border-radius:3px 0 0 3px;background:#e6e6e6;box-shadow:inset 0 3px 5px rgba(0,0,0,.125)"></div>
<span class="t" style="left:422.9px;top:265.8px;font-size:13px;color:#333">Genel</span>
<span class="t" style="left:483.2px;top:265.8px;font-size:13px;color:#333;letter-spacing:.3px">Depolu</span>
<span class="t" style="left:404.6px;top:306.6px;font-size:18px;color:#999;letter-spacing:-.21px">Kolon başlığını buraya sürükle</span>
<div class="a" style="left:1146.2px;top:297.3px;width:26px;height:25.5px;border:1px solid #ddd;border-radius:4px;background:#fff"></div>
<div class="a" style="left:1176.6px;top:297.3px;width:26.3px;height:25.5px;border:1px solid #ddd;border-radius:4px;background:#fff"></div>
<div class="a" style="left:1468.3px;top:297.3px;width:25.5px;height:25.5px;border:1px solid #ddd;border-radius:4px;background:#fff"></div>
<div class="a" style="left:1222.4px;top:297.3px;width:240.4px;height:25.5px;border:1px solid #ddd;border-radius:4px;background:#fff"></div>
<svg style="left:1154px;top:303.8px" width="10" height="12.2" viewBox="0 0 12 15"><path d="M.6 .4 H7.6 L11.4 4.2 V14.6 H.6 Z" fill="#111"/><path d="M7.4 .6 V4.4 H11.2" fill="none" stroke="#fff" stroke-width=".9"/><path d="M3.6 7.4 L7.8 12.6 M7.8 7.4 L3.6 12.6" stroke="#fff" stroke-width="1.5"/></svg>
<svg style="left:1183px;top:303.4px" width="14" height="13" viewBox="0 0 14 13"><path d="M4 3 V1 H12.8 V9 H7.4" fill="none" stroke="#222" stroke-width="1"/><rect x="1" y="3.8" width="5.6" height="8.4" fill="#fff" stroke="#1c1c3a" stroke-width="1.1"/><path d="M1 6.6 H6.6 M1 9.4 H6.6" stroke="#1c1c3a" stroke-width="1"/></svg>
<svg style="left:1230px;top:303.2px" width="12.6" height="12.6" viewBox="0 0 13 13"><circle cx="5.3" cy="5.3" r="4.2" stroke="#999" stroke-width="1.6" fill="none"/><path d="M8.4 8.4 L12.4 12.4" stroke="#999" stroke-width="1.8"/></svg>
<span class="t" style="left:1248.4px;top:304.4px;font-size:12px;color:#9a9a9a;letter-spacing:-.5px">Ara...</span>
<svg style="left:1474.5px;top:303.5px" width="13" height="13" viewBox="0 0 16 16"><path d="M6.70 0.41 L9.30 0.41 L9.47 1.98 L11.22 2.70 L12.45 1.71 L14.29 3.55 L13.30 4.78 L14.02 6.53 L15.59 6.70 L15.59 9.30 L14.02 9.47 L13.30 11.22 L14.29 12.45 L12.45 14.29 L11.22 13.30 L9.47 14.02 L9.30 15.59 L6.70 15.59 L6.53 14.02 L4.78 13.30 L3.55 14.29 L1.71 12.45 L2.70 11.22 L1.98 9.47 L0.41 9.30 L0.41 6.70 L1.98 6.53 L2.70 4.78 L1.71 3.55 L3.55 1.71 L4.78 2.70 L6.53 1.98 Z M11.8 8 A3.8 3.8 0 1 0 4.2 8 A3.8 3.8 0 1 0 11.8 8 Z" fill="#111" fill-rule="evenodd"/></svg>
<div class="a" style="left:399px;top:328px;width:1095px;height:597px;background:#fff;border:1px solid #ddd"></div>
<div class="a" style="left:400px;top:411px;width:1093px;height:42px;background:#f5f5f5"></div>
<div class="a" style="left:400px;top:497px;width:1093px;height:42px;background:#f5f5f5"></div>
<div class="a" style="left:400px;top:583px;width:1093px;height:26px;background:#f5f5f5"></div>
<div class="a" style="left:400px;top:653px;width:1093px;height:58px;background:#f5f5f5"></div>
<div class="a" style="left:400px;top:755px;width:1093px;height:26px;background:#f5f5f5"></div>
<div class="a" style="left:400px;top:809px;width:1093px;height:26px;background:#f5f5f5"></div>
<div class="a" style="left:399px;top:355px;width:1095px;height:1px;background:#ddd"></div>
<div class="a" style="left:399px;top:382px;width:1095px;height:2px;background:#ddd"></div>
<div class="a" style="left:399px;top:410px;width:1095px;height:1px;background:#ddd"></div>
<div class="a" style="left:399px;top:453px;width:1095px;height:1px;background:#ddd"></div>
<div class="a" style="left:399px;top:496px;width:1095px;height:1px;background:#ddd"></div>
<div class="a" style="left:399px;top:539px;width:1095px;height:1px;background:#ddd"></div>
<div class="a" style="left:399px;top:582px;width:1095px;height:1px;background:#ddd"></div>
<div class="a" style="left:399px;top:609px;width:1095px;height:1px;background:#ddd"></div>
<div class="a" style="left:399px;top:652px;width:1095px;height:1px;background:#ddd"></div>
<div class="a" style="left:399px;top:711px;width:1095px;height:1px;background:#ddd"></div>
<div class="a" style="left:399px;top:754px;width:1095px;height:1px;background:#ddd"></div>
<div class="a" style="left:399px;top:781px;width:1095px;height:1px;background:#ddd"></div>
<div class="a" style="left:399px;top:808px;width:1095px;height:1px;background:#ddd"></div>
<div class="a" style="left:399px;top:835px;width:1095px;height:1px;background:#ddd"></div>
<div class="a" style="left:573px;top:328px;width:1px;height:596px;background:#ddd"></div>
<div class="a" style="left:774px;top:328px;width:1px;height:596px;background:#ddd"></div>
<div class="a" style="left:948px;top:328px;width:1px;height:596px;background:#ddd"></div>
<div class="a" style="left:1130px;top:328px;width:1px;height:596px;background:#ddd"></div>
<div class="a" style="left:1307px;top:328px;width:1px;height:596px;background:#ddd"></div>
<span class="t" style="left:405.5px;top:336.8px;font-size:12px;color:#959595;letter-spacing:-0.18px">Stok Kodu</span>
<svg style="left:555px;top:336px" width="13" height="12" viewBox="0 0 13 12"><path d="M.3 .3 H12.7 L8.4 5.2 V10.3 L4.6 11.9 V5.2 Z" fill="#c6c6c6"/></svg>
<svg style="left:407.2px;top:363.6px" width="13" height="13" viewBox="0 0 13 13"><circle cx="5.3" cy="5.3" r="4.2" stroke="#8a8a8a" stroke-width="1.6" fill="none"/><path d="M8.4 8.4 L12.4 12.4" stroke="#8a8a8a" stroke-width="1.8"/></svg>
<span class="t" style="left:579.5px;top:336.8px;font-size:12px;color:#959595;letter-spacing:-0.08px">Stok Adı</span>
<svg style="left:756px;top:336px" width="13" height="12" viewBox="0 0 13 12"><path d="M.3 .3 H12.7 L8.4 5.2 V10.3 L4.6 11.9 V5.2 Z" fill="#c6c6c6"/></svg>
<svg style="left:579.6px;top:363.6px" width="13" height="13" viewBox="0 0 13 13"><circle cx="5.3" cy="5.3" r="4.2" stroke="#8a8a8a" stroke-width="1.6" fill="none"/><path d="M8.4 8.4 L12.4 12.4" stroke="#8a8a8a" stroke-width="1.8"/></svg>
<span class="t" style="left:780.5px;top:336.8px;font-size:12px;color:#959595;letter-spacing:-0.2px">Birim</span>
<svg style="left:930px;top:336px" width="13" height="12" viewBox="0 0 13 12"><path d="M.3 .3 H12.7 L8.4 5.2 V10.3 L4.6 11.9 V5.2 Z" fill="#c6c6c6"/></svg>
<svg style="left:780.6px;top:363.6px" width="13" height="13" viewBox="0 0 13 13"><circle cx="5.3" cy="5.3" r="4.2" stroke="#8a8a8a" stroke-width="1.6" fill="none"/><path d="M8.4 8.4 L12.4 12.4" stroke="#8a8a8a" stroke-width="1.8"/></svg>
<span class="t" style="right:402px;top:336.8px;font-size:12px;color:#959595;letter-spacing:-0.12px">Satılan Miktar</span>
<svg style="left:954.6px;top:336px" width="13" height="12" viewBox="0 0 13 12"><path d="M.3 .3 H12.7 L8.4 5.2 V10.3 L4.6 11.9 V5.2 Z" fill="#8a8a8a"/></svg>
<svg style="left:954.6px;top:363.6px" width="13" height="13" viewBox="0 0 13 13"><circle cx="5.3" cy="5.3" r="4.2" stroke="#8a8a8a" stroke-width="1.6" fill="none"/><path d="M8.4 8.4 L12.4 12.4" stroke="#8a8a8a" stroke-width="1.8"/></svg>
<span class="t" style="right:225px;top:336.8px;font-size:12px;color:#959595;letter-spacing:-0.27px">Satış Tutarı</span>
<svg style="left:1136.6px;top:336px" width="13" height="12" viewBox="0 0 13 12"><path d="M.3 .3 H12.7 L8.4 5.2 V10.3 L4.6 11.9 V5.2 Z" fill="#c6c6c6"/></svg>
<svg style="left:1136.6px;top:363.6px" width="13" height="13" viewBox="0 0 13 13"><circle cx="5.3" cy="5.3" r="4.2" stroke="#8a8a8a" stroke-width="1.6" fill="none"/><path d="M8.4 8.4 L12.4 12.4" stroke="#8a8a8a" stroke-width="1.8"/></svg>
<span class="t" style="right:39px;top:336.8px;font-size:12px;color:#959595;letter-spacing:0.14px">Toplam Miktar</span>
<svg style="left:1313.6px;top:336px" width="13" height="12" viewBox="0 0 13 12"><path d="M.3 .3 H12.7 L8.4 5.2 V10.3 L4.6 11.9 V5.2 Z" fill="#c6c6c6"/></svg>
<svg style="left:1313.6px;top:363.6px" width="13" height="13" viewBox="0 0 13 13"><circle cx="5.3" cy="5.3" r="4.2" stroke="#8a8a8a" stroke-width="1.6" fill="none"/><path d="M8.4 8.4 L12.4 12.4" stroke="#8a8a8a" stroke-width="1.8"/></svg>
<span class="t" style="left:405.5px;top:392px;font-size:12px;color:#333;letter-spacing:-.3px">001</span>
<span class="t" style="left:579.5px;top:392px;font-size:12px;color:#333;letter-spacing:0;transform:scaleX(0.928);transform-origin:0 0">STOK 001</span>
<span class="t" style="left:780.5px;top:392px;font-size:12px;color:#333;letter-spacing:0.150px">Adet</span>
<span class="t" style="right:402px;top:392px;font-size:12px;color:#333;letter-spacing:-.38px">1,00</span>
<span class="t" style="right:225px;top:392px;font-size:12px;color:#333;letter-spacing:-.38px">15.000,00</span>
<span class="t" style="right:39px;top:392px;font-size:12px;color:#333;letter-spacing:-.38px">399,00</span>
<span class="t" style="left:405.5px;top:419px;font-size:12px;color:#333;letter-spacing:-.3px">013</span>
<span class="t" style="left:579.5px;top:419px;font-size:12px;color:#333;letter-spacing:-0.296px">Fisher Paykel Eson Nasal Maske</span>
<span class="t" style="left:579.5px;top:435px;font-size:12px;color:#333;letter-spacing:-0.120px">Yedek Maske M Beden</span>
<span class="t" style="left:780.5px;top:419px;font-size:12px;color:#333;letter-spacing:0.150px">Adet</span>
<span class="t" style="right:402px;top:419px;font-size:12px;color:#333;letter-spacing:-.38px">1,00</span>
<span class="t" style="right:225px;top:419px;font-size:12px;color:#333;letter-spacing:-.38px">361,88</span>
<span class="t" style="right:39px;top:419px;font-size:12px;color:#333;letter-spacing:-.38px">32,00</span>
<span class="t" style="left:405.5px;top:462px;font-size:12px;color:#333;letter-spacing:-.3px">014</span>
<span class="t" style="left:579.5px;top:462px;font-size:12px;color:#333;letter-spacing:-0.347px">Fisher Paykel Eson Nasal</span>
<span class="t" style="left:579.5px;top:478px;font-size:12px;color:#333;letter-spacing:-0.144px">Maske+Yedek Maske L Beden</span>
<span class="t" style="left:780.5px;top:462px;font-size:12px;color:#333;letter-spacing:0.150px">Adet</span>
<span class="t" style="right:402px;top:462px;font-size:12px;color:#333;letter-spacing:-.38px">1,00</span>
<span class="t" style="right:225px;top:462px;font-size:12px;color:#333;letter-spacing:-.38px">361,88</span>
<span class="t" style="right:39px;top:462px;font-size:12px;color:#333;letter-spacing:-.38px">2,00</span>
<span class="t" style="left:405.5px;top:505px;font-size:12px;color:#333;letter-spacing:-.3px">015</span>
<span class="t" style="left:579.5px;top:505px;font-size:12px;color:#333;letter-spacing:-0.348px">Fisher Paykel Eson 2 Nasal</span>
<span class="t" style="left:579.5px;top:521px;font-size:12px;color:#333;letter-spacing:-0.144px">Maske+Yedek Maske L Beden</span>
<span class="t" style="left:780.5px;top:505px;font-size:12px;color:#333;letter-spacing:0.150px">Adet</span>
<span class="t" style="right:402px;top:505px;font-size:12px;color:#333;letter-spacing:-.38px">1,00</span>
<span class="t" style="right:225px;top:505px;font-size:12px;color:#333;letter-spacing:-.38px">362,26</span>
<span class="t" style="right:39px;top:505px;font-size:12px;color:#333;letter-spacing:-.38px">2,00</span>
<span class="t" style="left:405.5px;top:548px;font-size:12px;color:#333;letter-spacing:-.3px">016</span>
<span class="t" style="left:579.5px;top:548px;font-size:12px;color:#333;letter-spacing:-0.348px">Fisher Paykel Eson 2 Nasal</span>
<span class="t" style="left:579.5px;top:564px;font-size:12px;color:#333;letter-spacing:-0.068px">Maske+Yedek Maske M Beden</span>
<span class="t" style="left:780.5px;top:548px;font-size:12px;color:#333;letter-spacing:0.150px">Adet</span>
<span class="t" style="right:402px;top:548px;font-size:12px;color:#333;letter-spacing:-.38px">1,00</span>
<span class="t" style="right:225px;top:548px;font-size:12px;color:#333;letter-spacing:-.38px">362,26</span>
<span class="t" style="right:39px;top:548px;font-size:12px;color:#333;letter-spacing:-.38px">2,00</span>
<span class="t" style="left:405.5px;top:591px;font-size:12px;color:#333;letter-spacing:-.3px">02</span>
<span class="t" style="left:579.5px;top:591px;font-size:12px;color:#333;letter-spacing:0.400px">kombi</span>
<span class="t" style="left:780.5px;top:591px;font-size:12px;color:#333;letter-spacing:0.150px">Adet</span>
<span class="t" style="right:402px;top:591px;font-size:12px;color:#333;letter-spacing:-.38px">1,00</span>
<span class="t" style="right:225px;top:591px;font-size:12px;color:#333;letter-spacing:-.38px">20,00</span>
<span class="t" style="right:39px;top:591px;font-size:12px;color:#333;letter-spacing:-.38px">4,00</span>
<span class="t" style="left:405.5px;top:618px;font-size:12px;color:#333;letter-spacing:-.3px">03</span>
<span class="t" style="left:579.5px;top:618px;font-size:12px;color:#333;letter-spacing:0.036px">Actolind Foam-(vücut Temizleme</span>
<span class="t" style="left:579.5px;top:634px;font-size:12px;color:#333;letter-spacing:-0.076px">Ve Bakım Köpüğü)-500ml.</span>
<span class="t" style="left:780.5px;top:618px;font-size:12px;color:#333;letter-spacing:0.150px">Adet</span>
<span class="t" style="right:402px;top:618px;font-size:12px;color:#333;letter-spacing:-.38px">1,00</span>
<span class="t" style="right:225px;top:618px;font-size:12px;color:#333;letter-spacing:-.38px">21,10</span>
<span class="t" style="right:39px;top:618px;font-size:12px;color:#333;letter-spacing:-.38px">12,00</span>
<span class="t" style="left:405.5px;top:661px;font-size:12px;color:#333;letter-spacing:-.3px">05</span>
<span class="t" style="left:579.5px;top:661px;font-size:12px;color:#333;letter-spacing:-0.104px">Fisher Paykel Icon Auto</span>
<span class="t" style="left:579.5px;top:677px;font-size:12px;color:#333;letter-spacing:0.092px">(Thermosmart Hortumlu) Auto</span>
<span class="t" style="left:579.5px;top:693px;font-size:12px;color:#333;letter-spacing:-0.163px">Cpap</span>
<span class="t" style="left:780.5px;top:661px;font-size:12px;color:#333;letter-spacing:0.150px">Adet</span>
<span class="t" style="right:402px;top:661px;font-size:12px;color:#333;letter-spacing:-.38px">1,00</span>
<span class="t" style="right:225px;top:661px;font-size:12px;color:#333;letter-spacing:-.38px">4.350,01</span>
<span class="t" style="right:39px;top:661px;font-size:12px;color:#333;letter-spacing:-.38px">2,00</span>
<span class="t" style="left:405.5px;top:720px;font-size:12px;color:#333;letter-spacing:-.3px">06</span>
<span class="t" style="left:579.5px;top:720px;font-size:12px;color:#333;letter-spacing:-0.191px">Fisher Paykel (Thermosmart</span>
<span class="t" style="left:579.5px;top:736px;font-size:12px;color:#333;letter-spacing:0.056px">Hortum) Icon Thermosmart</span>
<span class="t" style="left:780.5px;top:720px;font-size:12px;color:#333;letter-spacing:0.150px">Adet</span>
<span class="t" style="right:402px;top:720px;font-size:12px;color:#333;letter-spacing:-.38px">1,00</span>
<span class="t" style="right:225px;top:720px;font-size:12px;color:#333;letter-spacing:-.38px">338,98</span>
<span class="t" style="right:39px;top:720px;font-size:12px;color:#333;letter-spacing:-.38px">2,00</span>
<span class="t" style="left:405.5px;top:763px;font-size:12px;color:#333;letter-spacing:0;transform:scaleX(0.915);transform-origin:0 0">BRK001</span>
<span class="t" style="left:579.5px;top:763px;font-size:12px;color:#333;letter-spacing:0;transform:scaleX(0.936);transform-origin:0 0">BARKOD 001</span>
<span class="t" style="left:780.5px;top:763px;font-size:12px;color:#333;letter-spacing:0.150px">Adet</span>
<span class="t" style="right:402px;top:763px;font-size:12px;color:#333;letter-spacing:-.38px">1,00</span>
<span class="t" style="right:225px;top:763px;font-size:12px;color:#333;letter-spacing:-.38px">0,00</span>
<span class="t" style="right:39px;top:763px;font-size:12px;color:#333;letter-spacing:-.38px">2,00</span>
<span class="t" style="left:405.5px;top:790px;font-size:12px;color:#333;letter-spacing:0.071px">hizmet01</span>
<span class="t" style="left:579.5px;top:790px;font-size:12px;color:#333;letter-spacing:0.163px">birim test hizmeti</span>
<span class="t" style="left:780.5px;top:790px;font-size:12px;color:#333;letter-spacing:0.150px">Adet</span>
<span class="t" style="right:402px;top:790px;font-size:12px;color:#333;letter-spacing:-.38px">1,00</span>
<span class="t" style="right:225px;top:790px;font-size:12px;color:#333;letter-spacing:-.38px">5.000,00</span>
<span class="t" style="right:39px;top:790px;font-size:12px;color:#333;letter-spacing:-.38px">3,00</span>
<span class="t" style="left:405.5px;top:817px;font-size:12px;color:#333;letter-spacing:0;transform:scaleX(0.942);transform-origin:0 0">S005</span>
<span class="t" style="left:579.5px;top:817px;font-size:12px;color:#333;letter-spacing:0;transform:scaleX(0.852);transform-origin:0 0">CETVEL</span>
<span class="t" style="left:780.5px;top:817px;font-size:12px;color:#333;letter-spacing:-0.458px">Plaka</span>
<span class="t" style="right:402px;top:817px;font-size:12px;color:#333;letter-spacing:-.38px">1,00</span>
<span class="t" style="right:225px;top:817px;font-size:12px;color:#333;letter-spacing:-.38px">23,00</span>
<span class="t" style="right:39px;top:817px;font-size:12px;color:#333;letter-spacing:-.38px">12,60</span>
<span class="t" style="left:405.5px;top:844px;font-size:12px;color:#333;letter-spacing:0;transform:scaleX(0.904);transform-origin:0 0">YL9</span>
<span class="t" style="left:579.5px;top:844px;font-size:12px;color:#333;letter-spacing:-0.002px">diksiyon kursu</span>
<span class="t" style="left:780.5px;top:844px;font-size:12px;color:#333;letter-spacing:0.150px">Adet</span>
<span class="t" style="right:402px;top:844px;font-size:12px;color:#333;letter-spacing:-.38px">1,00</span>
<span class="t" style="right:225px;top:844px;font-size:12px;color:#333;letter-spacing:-.38px">16.949,15</span>
<span class="t" style="right:39px;top:844px;font-size:12px;color:#333;letter-spacing:-.38px">3,00</span>
<span class="t" style="left:20.3px;top:1005px;font-size:13px;color:#fff;letter-spacing:.31px">evobulut.com © 2015-2025</span>
<span class="t" style="left:197.8px;top:1005px;font-size:13px;color:#b8985a;letter-spacing:.16px">(Versiyon # 1.8.18)</span>
<div class="a" style="left:1465px;top:1002.2px;width:31px;height:21.8px;border-radius:3px;background:#5b8ba0;box-shadow:inset 0 -2px 0 rgba(0,0,0,.08)"></div>
<svg style="left:1469.6px;top:1005.6px" width="22" height="15" viewBox="0 0 22 15"><circle cx="4.3" cy="4.3" r="2.7" stroke="#fff" stroke-width="1.7" fill="none"/><circle cx="8.9" cy="9.3" r="2.7" stroke="#fff" stroke-width="1.7" fill="none"/><path d="M5.6 5.8 L7.6 7.9" stroke="#fff" stroke-width="1.6"/><path d="M13.2 10.4 L16.8 6.4 L20.4 10.4 Z" fill="#fff"/></svg>
</body></html>
